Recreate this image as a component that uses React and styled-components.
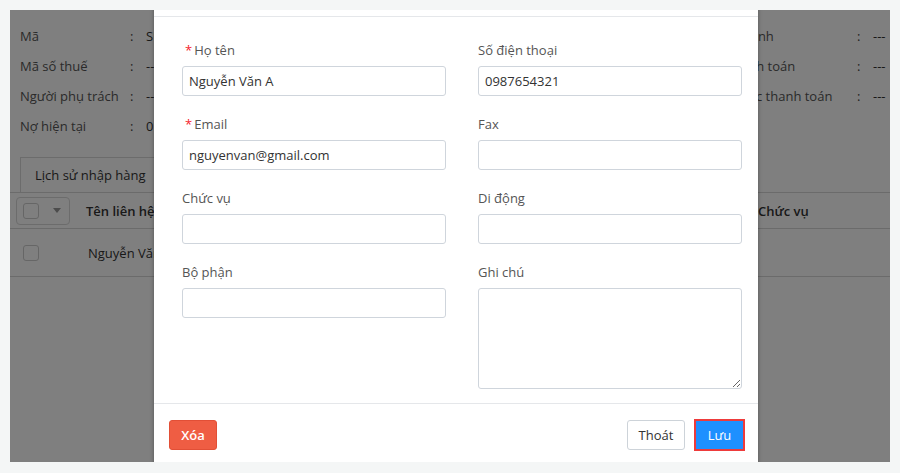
import React from "react";
import styled, { createGlobalStyle } from "styled-components";

const Global = createGlobalStyle`
  html, body {
    margin: 0;
    padding: 0;
    background: #f4f6f6;
    font-family: "Open Sans", "Noto Sans", sans-serif;
  }
  * { box-sizing: border-box; }
`;

const Screen = styled.div`
  width: 900px;
  height: 473px;
  padding: 10px 10px 11px;
`;

const Frame = styled.div`
  position: relative;
  width: 880px;
  height: 452px;
  overflow: hidden;
  background: #fff;
`;

const Page = styled.div`
  padding-top: 11px;
  color: #555;
  font-size: 13px;
`;

const InfoWrap = styled.div`
  display: flex;
  justify-content: space-between;
  padding: 0 3px 0 10px;
`;

const InfoBlock = styled.div`
  display: grid;
  grid-template-columns: ${p => p.$label}px 16px ${p => p.$value}px;
  grid-auto-rows: 30px;
  align-items: center;
  white-space: nowrap;
`;

const Colon = styled.span`
  color: #444;
`;

const Value = styled.span`
  color: #333;
  white-space: nowrap;
  overflow: hidden;
`;

const TabBar = styled.div`
  display: flex;
  margin-top: 16px;
  padding-left: 10px;
`;

const Tab = styled.div`
  height: 35px;
  padding: 0 14px;
  display: flex;
  align-items: center;
  border: 1px solid #d8d8d8;
  border-bottom: 0;
  color: #333;
`;

const Row = styled.div`
  display: flex;
  align-items: center;
  height: ${p => p.$h}px;
  border-top: 1px solid #d6d6d6;
  ${p => p.$last && "border-bottom: 1px solid #d6d6d6;"}
  color: #333;
`;

const Cell = styled.div`
  width: ${p => p.$w}px;
  display: flex;
  align-items: center;
  font-weight: ${p => (p.$bold ? 600 : 400)};
  white-space: nowrap;
`;

const SelectBox = styled.div`
  display: flex;
  align-items: center;
  gap: 14px;
  margin-left: 6px;
  padding: 5px 8px 5px 6px;
  border: 1px solid #d8d8d8;
  border-radius: 4px;
`;

const Check = styled.span`
  width: 16px;
  height: 16px;
  border: 1px solid #ccc;
  border-radius: 3px;
  background: #fff;
  margin-left: ${p => p.$ml || 0}px;
`;

const Caret = styled.span`
  width: 0;
  height: 0;
  border-left: 4px solid transparent;
  border-right: 4px solid transparent;
  border-top: 5px solid #999;
`;

const Overlay = styled.div`
  position: absolute;
  inset: 0;
  background: rgba(0, 0, 0, 0.5);
`;

const Modal = styled.div`
  position: absolute;
  left: 144px;
  top: -40px;
  width: 604px;
  height: 540px;
  background: #fff;
  box-shadow: 0 0 4px rgba(0, 0, 0, 0.35);
  display: flex;
  flex-direction: column;
`;

const Header = styled.div`
  flex: none;
  height: 47px;
  border-bottom: 1px solid #e5e7ea;
`;

const Body = styled.div`
  flex: none;
  display: grid;
  grid-template-columns: 1fr 1fr;
  align-content: start;
  column-gap: 32px;
  padding: 24px 16px 0 28px;
  height: 386px;
`;

const Field = styled.div`
  display: flex;
  flex-direction: column;
  margin-bottom: 19px;
`;

const Label = styled.label`
  font-size: 13px;
  line-height: 18px;
  color: #555;
  margin-bottom: 7px;
  padding-left: ${p => (p.$req ? 3 : 0)}px;

  b {
    color: #f5222d;
    font-weight: 400;
    margin-right: 2px;
  }
`;

const Input = styled.input`
  height: 30px;
  width: 100%;
  border: 1px solid #cfd5dc;
  border-radius: 3px;
  padding: 0 6px;
  font: 13px "Open Sans", "Noto Sans", sans-serif;
  color: #333;
  outline: 0;
`;

const Area = styled.textarea`
  display: block;
  height: 101px;
  width: 100%;
  border: 1px solid #cfd5dc;
  border-radius: 3px;
  padding: 6px;
  font: 13px "Open Sans", "Noto Sans", sans-serif;
  outline: 0;
  resize: vertical;
`;

const Footer = styled.div`
  display: flex;
  align-items: center;
  border-top: 1px solid #e5e7ea;
  padding: 15px 13px 0 15px;
`;

const Spacer = styled.div`
  flex: 1;
`;

const Btn = styled.button`
  width: ${p => p.$w}px;
  height: ${p => (p.$primary ? 32 : 30)}px;
  padding: 0;
  margin-left: ${p => p.$ml || 0}px;
  border-radius: 3px;
  font: 13px "Open Sans", "Noto Sans", sans-serif;
  cursor: pointer;
  ${p =>
    p.$danger &&
    `background: #ef5d43; border: 1px solid #e24f36; color: #fff; font-weight: 600;`}
  ${p =>
    p.$plain && `background: #fff; border: 1px solid #cdd3d9; color: #333;`}
  ${p =>
    p.$primary &&
    `background: #1e90ff; border: 2px solid #ee3b3b; border-radius: 0; color: #fff;`}
`;

export default function App() {
  return (
    <Screen>
      <Global />
      <Frame>
        <Page>
          <InfoWrap>
            <InfoBlock $label={110} $value={20}>
              <span>Mã</span><Colon>:</Colon><Value>SUP001</Value>
              <span>Mã số thuế</span><Colon>:</Colon><Value>---</Value>
              <span>Người phụ trách</span><Colon>:</Colon><Value>---</Value>
              <span>Nợ hiện tại</span><Colon>:</Colon><Value>0</Value>
            </InfoBlock>
            <InfoBlock $label={173} $value={14}>
              <span>Thuế mặc định</span><Colon>:</Colon><Value>---</Value>
              <span>Kỳ hạn thanh toán</span><Colon>:</Colon><Value>---</Value>
              <span>Phương thức thanh toán</span><Colon>:</Colon><Value>---</Value>
            </InfoBlock>
          </InfoWrap>
          <TabBar>
            <Tab>Lịch sử nhập hàng</Tab>
          </TabBar>
          <Row $h={36}>
            <Cell $w={76}>
              <SelectBox>
                <Check />
                <Caret />
              </SelectBox>
            </Cell>
            <Cell $w={672} $bold>Tên liên hệ</Cell>
            <Cell $w={120} $bold>Chức vụ</Cell>
          </Row>
          <Row $h={49} $last>
            <Cell $w={78}>
              <Check $ml={13} />
            </Cell>
            <Cell $w={670}>Nguyễn Văn A</Cell>
            <Cell $w={120}></Cell>
          </Row>
        </Page>
        <Overlay />
        <Modal>
          <Header />
          <Body>
            <Field>
              <Label $req><b>*</b>Họ tên</Label>
              <Input defaultValue="Nguyễn Văn A" />
            </Field>
            <Field>
              <Label>Số điện thoại</Label>
              <Input defaultValue="0987654321" />
            </Field>
            <Field>
              <Label $req><b>*</b>Email</Label>
              <Input defaultValue="nguyenvan@gmail.com" />
            </Field>
            <Field>
              <Label>Fax</Label>
              <Input />
            </Field>
            <Field>
              <Label>Chức vụ</Label>
              <Input />
            </Field>
            <Field>
              <Label>Di động</Label>
              <Input />
            </Field>
            <Field>
              <Label>Bộ phận</Label>
              <Input />
            </Field>
            <Field>
              <Label>Ghi chú</Label>
              <Area />
            </Field>
          </Body>
          <Footer>
            <Btn $danger $w={48}>Xóa</Btn>
            <Spacer />
            <Btn $plain $w={58}>Thoát</Btn>
            <Btn $primary $w={51} $ml={9}>Lưu</Btn>
          </Footer>
        </Modal>
      </Frame>
    </Screen>
  );
}
